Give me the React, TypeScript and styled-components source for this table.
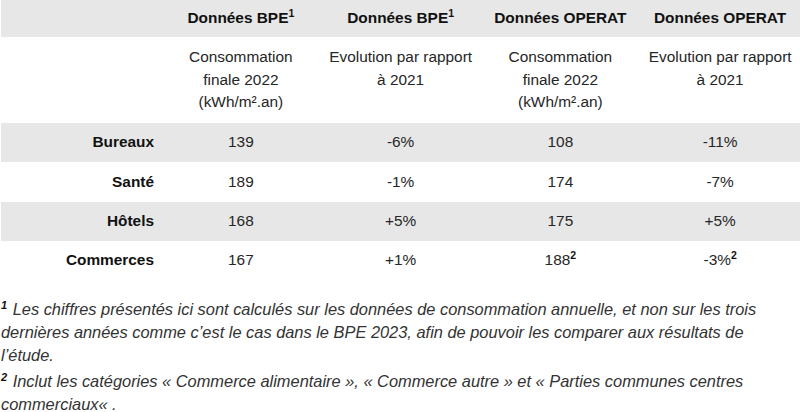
import styled, { createGlobalStyle } from "styled-components";

const GlobalStyle = createGlobalStyle`
  html, body {
    margin: 0;
    padding: 0;
    background: #ffffff;
  }
  body {
    font-family: "Liberation Sans", Arial, sans-serif;
    color: #222222;
  }
`;

type RowData = {
  label: string;
  bpe: string;
  bpeEvo: string;
  operat: string;
  operatEvo: string;
  note?: boolean;
};

const rows: RowData[] = [
  { label: "Bureaux", bpe: "139", bpeEvo: "-6%", operat: "108", operatEvo: "-11%" },
  { label: "Santé", bpe: "189", bpeEvo: "-1%", operat: "174", operatEvo: "-7%" },
  { label: "Hôtels", bpe: "168", bpeEvo: "+5%", operat: "175", operatEvo: "+5%" },
  { label: "Commerces", bpe: "167", bpeEvo: "+1%", operat: "188", operatEvo: "-3%", note: true },
];

export default function App() {
  return (
    <>
      <GlobalStyle />
      <Page>
        <Table>
          <Row $shaded $height={37}>
            <Cell />
            <HeadCell>
              <span>
                Données BPE<Sup>1</Sup>
              </span>
            </HeadCell>
            <HeadCell>
              <span>
                Données BPE<Sup>1</Sup>
              </span>
            </HeadCell>
            <HeadCell>
              <span>Données OPERAT</span>
            </HeadCell>
            <HeadCell>
              <span>Données OPERAT</span>
            </HeadCell>
          </Row>
          <Row $height={86}>
            <Cell />
            <SubCell>
              Consommation
              <br />
              finale 2022
              <br />
              (kWh/m².an)
            </SubCell>
            <SubCell>
              Evolution par rapport
              <br />à 2021
            </SubCell>
            <SubCell>
              Consommation
              <br />
              finale 2022
              <br />
              (kWh/m².an)
            </SubCell>
            <SubCell>
              Evolution par rapport
              <br />à 2021
            </SubCell>
          </Row>
          {rows.map((r, i) => (
            <Row key={r.label} $shaded={i % 2 === 0} $height={i === 1 ? 40 : 39}>
              <LabelCell>
                <span>{r.label}</span>
              </LabelCell>
              <Cell>
                <span>{r.bpe}</span>
              </Cell>
              <Cell>
                <span>{r.bpeEvo}</span>
              </Cell>
              <Cell>
                <span>
                  {r.operat}
                  {r.note && <Sup>2</Sup>}
                </span>
              </Cell>
              <Cell>
                <span>
                  {r.operatEvo}
                  {r.note && <Sup>2</Sup>}
                </span>
              </Cell>
            </Row>
          ))}
        </Table>

        <Notes>
          <Note>
            <NoteSup>1</NoteSup> Les chiffres présentés ici sont calculés sur les données de
            consommation annuelle, et non sur les trois dernières années comme c’est le cas dans
            le BPE 2023, afin de pouvoir les comparer aux résultats de l’étude.
          </Note>
          <Note>
            <NoteSup>2</NoteSup> Inclut les catégories « Commerce alimentaire », « Commerce autre
            » et « Parties communes centres commerciaux« .
          </Note>
        </Notes>
      </Page>
    </>
  );
}

const Page = styled.div`
  width: 800px;
  height: 412px;
  overflow: hidden;
`;

const Table = styled.div`
  display: flex;
  flex-direction: column;
  padding-left: 1px;
`;

const Row = styled.div<{ $shaded?: boolean; $height: number }>`
  display: grid;
  grid-template-columns: 160px repeat(4, 1fr);
  height: ${(p) => p.$height}px;
  background: ${(p) => (p.$shaded ? "#e7e7e7" : "#ffffff")};
`;

const Cell = styled.div`
  display: flex;
  align-items: center;
  justify-content: center;
  text-align: center;
  font-size: 15.4px;
  line-height: 22.5px;
  color: #262626;
`;

const SubCell = styled(Cell)`
  display: block;
  padding-top: 9px;
  padding-bottom: 0;
`;

const HeadCell = styled(Cell)`
  font-weight: bold;
  color: #111111;
`;

const LabelCell = styled(Cell)`
  justify-content: flex-end;
  padding-right: 7px;
  font-weight: bold;
  color: #111111;
`;

const Sup = styled.sup`
  font-size: 10.5px;
  font-weight: bold;
  line-height: 1;
  vertical-align: 6px;
  color: #111111;
`;

const Notes = styled.div`
  display: flex;
  flex-direction: column;
  gap: 3px;
  padding: 18px 6px 0 1px;
`;

const Note = styled.p`
  margin: 0;
  font-size: 16.4px;
  line-height: 23px;
  font-style: italic;
  color: #333333;
`;

const NoteSup = styled.sup`
  font-size: 11px;
  font-weight: bold;
  line-height: 1;
  vertical-align: 6px;
  margin-right: 1px;
  color: #111111;
`;
